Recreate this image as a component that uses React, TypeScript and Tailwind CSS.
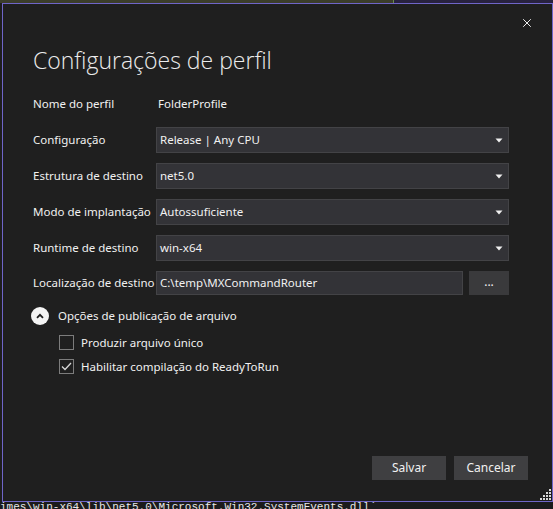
import { X } from "lucide-react";

const rows = [
  { label: "Configuração", value: "Release | Any CPU" },
  { label: "Estrutura de destino", value: "net5.0" },
  { label: "Modo de implantação", value: "Autossuficiente" },
  { label: "Runtime de destino", value: "win-x64" },
];

function Caret() {
  return (
    <svg width="8" height="5" viewBox="0 0 8 5" className="shrink-0">
      <path d="M0.5 0.5 H7.5 L4 4.5 Z" fill="#f0f0f0" />
    </svg>
  );
}

function Combo({ value }: { value: string }) {
  return (
    <div className="flex h-[26px] flex-1 items-center justify-between border border-[#434346] bg-[#333337] pl-[3px] pr-[5px]">
      <span>{value}</span>
      <Caret />
    </div>
  );
}

function Grip() {
  const dots = [
    [9, 0],
    [6, 3], [9, 3],
    [3, 6], [6, 6], [9, 6],
    [0, 9], [3, 9], [6, 9], [9, 9],
  ];
  return (
    <svg width="11" height="11" viewBox="0 0 11 11">
      {dots.map(([x, y], i) => (
        <rect key={i} x={x} y={y} width="2" height="2" fill="#d8d8d8" />
      ))}
    </svg>
  );
}

export default function App() {
  return (
    <div className="relative h-[509px] w-[553px] overflow-hidden bg-[#1b1b1c] font-['Noto_Sans',sans-serif] text-[11.5px] text-[#f1f1f1]">
      <div className="flex h-[3px]">
        <div className="w-[393px] bg-[#3b3d2a]" />
        <div className="w-px bg-[#6a8a4a]" />
        <div className="flex-1 bg-[#28223f]" />
      </div>

      <div className="flex">
        <div className="w-[2px] bg-[#1e1e1e]" />
        <div className="relative flex h-[499px] w-[551px] flex-col border border-[#6f65c8] bg-[#1f1f1f] pl-[30px] pr-[43px]">
          <div className="flex h-[26px] items-end justify-end">
            <X size={14} strokeWidth={1.7} className="mr-[-25px] text-[#f0f0f0]" />
          </div>

          <h1 className="mt-[13px] whitespace-nowrap font-['Open_Sans',sans-serif] text-[23px] font-light leading-[34px] text-[#ececec]">
            Configurações de perfil
          </h1>

          <div className="mt-[14px] flex flex-col gap-[10px] whitespace-nowrap">
            <div className="flex h-[26px] items-center">
              <span className="w-[125px]">Nome do perfil</span>
              <span>FolderProfile</span>
            </div>
            {rows.map((r) => (
              <div key={r.label} className="flex h-[26px] items-center">
                <span className="w-[123px]">{r.label}</span>
                <Combo value={r.value} />
              </div>
            ))}
            <div className="flex h-[24px] items-center">
              <span className="w-[123px]">Localização de destino</span>
              <div className="flex h-[24px] flex-1 items-center border border-[#434346] bg-[#333337] pl-[3px]">
                C:\temp\MXCommandRouter
              </div>
              <button className="ml-[6px] flex h-[24px] w-[40px] items-center justify-center bg-[#3a3a3c] pb-[3px] text-[12px]">
                ...
              </button>
            </div>
          </div>

          <div className="mt-[12px] flex h-[18px] items-center gap-[9px]">
            <div className="ml-[-2px] flex h-[18px] w-[18px] items-center justify-center rounded-full bg-[#f4f4f4]">
              <svg width="8" height="6" viewBox="0 0 8 6">
                <path d="M1 4.8 L4 1.8 L7 4.8" fill="none" stroke="#1f1f1f" strokeWidth="1.8" />
              </svg>
            </div>
            <span>Opções de publicação de arquivo</span>
          </div>

          <div className="mt-[10px] ml-[26px] flex flex-col gap-[9px]">
            <div className="flex h-[15px] items-center gap-[7px]">
              <div className="h-[15px] w-[15px] border border-[#7c7c7c]" />
              <span>Produzir arquivo único</span>
            </div>
            <div className="flex h-[15px] items-center gap-[7px]">
              <div className="flex h-[15px] w-[15px] items-center justify-center border border-[#7c7c7c]">
                <svg width="11" height="9" viewBox="0 0 11 9">
                  <path d="M1 4.5 L4 7.5 L10 1" fill="none" stroke="#d6d6d6" strokeWidth="1.3" />
                </svg>
              </div>
              <span>Habilitar compilação do ReadyToRun</span>
            </div>
          </div>

          <div className="mt-auto mb-[21px] mr-[-19px] flex justify-end gap-[8px]">
            <button className="h-[24px] w-[74px] bg-[#3f3f41] text-[12px]">Salvar</button>
            <button className="h-[24px] w-[74px] bg-[#3f3f41] text-[12px]">Cancelar</button>
          </div>

          <div className="absolute bottom-px right-px">
            <Grip />
          </div>
        </div>
      </div>

      <div className="mt-[-1px] whitespace-pre font-['Liberation_Mono',monospace] text-[11px] leading-[12px] text-[#e6e6e6]">
        imes\win-x64\lib\net5.0\Microsoft.Win32.SystemEvents.dll`
      </div>
    </div>
  );
}
